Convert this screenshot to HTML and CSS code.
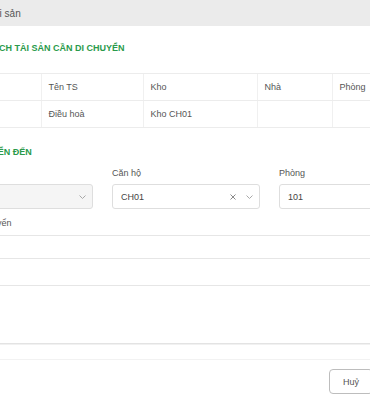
FILE: index.html
```html
<!DOCTYPE html>
<html lang="vi">
<head>
<meta charset="utf-8">
<link rel="stylesheet" href="styles.css">
</head>
<body>
<div class="modal">
  <div class="modal-header">Di chuyển tài sản</div>
  <div class="modal-body">
    <div class="section-title">Danh sách tài sản cần di chuyển</div>
    <table class="asset-table">
      <colgroup>
        <col class="c1"><col class="c2"><col class="c3"><col class="c4"><col class="c5"><col>
      </colgroup>
      <thead>
        <tr><th>Mã TS</th><th>Tên TS</th><th>Kho</th><th>Nhà</th><th>Phòng</th><th></th></tr>
      </thead>
      <tbody>
        <tr><td>TS001</td><td>Điều hoà</td><td>Kho CH01</td><td></td><td></td><td></td></tr>
      </tbody>
    </table>
    <div class="section-title second">Nơi chuyển đến</div>
    <div class="form-row">
      <div class="field">
        <div class="label">Tòa nhà</div>
        <div class="select disabled">
          <span class="value"></span>
          <svg class="chev" width="7" height="4" viewBox="0 0 7 4"><path d="M0.5 0.5l3 3 3-3" fill="none" stroke="#a8a8a8" stroke-width="1"/></svg>
        </div>
      </div>
      <div class="field">
        <div class="label">Căn hộ</div>
        <div class="select">
          <span class="value">CH01</span>
          <svg class="clear" width="6" height="6" viewBox="0 0 6 6"><path d="M0.5 0.5l5 5M5.5 0.5l-5 5" fill="none" stroke="#8a8a8a" stroke-width="1"/></svg>
          <svg class="chev" width="7" height="4" viewBox="0 0 7 4"><path d="M0.5 0.5l3 3 3-3" fill="none" stroke="#a8a8a8" stroke-width="1"/></svg>
        </div>
      </div>
      <div class="field">
        <div class="label">Phòng</div>
        <div class="select">
          <span class="value">101</span>
        </div>
      </div>
    </div>
    <div class="label reason-label">Lý do chuyển</div>
    <div class="input"></div>
    <div class="input second-input"></div>
    <div class="textarea"></div>
  </div>
  <div class="modal-footer">
    <button class="btn">Huỷ</button>
  </div>
</div>
</body>
</html>
```
FILE: styles.css
```css
html, body {
  margin: 0;
  padding: 0;
  background: #fff;
}
body {
  width: 370px;
  height: 400px;
  overflow: hidden;
  font-family: "Liberation Sans", Arial, sans-serif;
  color: #555;
}
.modal {
  margin-left: -60px;
  width: 520px;
}
.modal-header {
  height: 26px;
  background: #ebebeb;
  font-size: 10px;
  line-height: 27px;
  padding-left: 4px;
  color: #555;
}
.modal-body {
  padding-left: 18px;
}
.section-title {
  margin-top: 16px;
  font-size: 9px;
  line-height: 12px;
  font-weight: bold;
  text-transform: uppercase;
  color: #2a9a4b;
}
.section-title.second {
  margin-top: 18px;
  text-indent: -5px;
}
.asset-table {
  margin-top: 19px;
  border-collapse: collapse;
  table-layout: fixed;
  width: 500px;
  font-size: 9px;
}
.asset-table col.c1 { width: 83px; }
.asset-table col.c2 { width: 102px; }
.asset-table col.c3 { width: 114px; }
.asset-table col.c4 { width: 75px; }
.asset-table col.c5 { width: 75px; }
.asset-table th,
.asset-table td {
  border-top: 1px solid #ececec;
  border-bottom: 1px solid #ececec;
  border-left: 1px solid #f0f0f0;
  height: 26px;
  padding: 0 7px;
  text-align: left;
  font-weight: normal;
  color: #555;
}
.asset-table th:first-child,
.asset-table td:first-child {
  border-left: none;
}
.form-row {
  display: grid;
  grid-template-columns: 135px 148px 148px;
  column-gap: 19px;
  margin-top: 9px;
}
.label {
  font-size: 9px;
  line-height: 12px;
  color: #555;
}
.field .label {
  margin-bottom: 5px;
}
.select {
  box-sizing: border-box;
  height: 25px;
  border: 1px solid #dedede;
  border-radius: 3px;
  display: flex;
  align-items: center;
  padding: 0 6px 0 8px;
  gap: 10px;
  font-size: 9px;
  color: #444;
}
.select.disabled {
  background: #f5f5f5;
}
.select .value {
  flex: 1;
}
.reason-label {
  margin-top: 8px;
}
.input {
  box-sizing: border-box;
  margin-top: 6px;
  height: 24px;
  border-top: 1px solid #e6e6e6;
  border-bottom: 1px solid #e6e6e6;
}
.second-input {
  margin-top: 0;
  height: 27px;
  border-top: none;
}
.textarea {
  box-sizing: border-box;
  height: 58px;
  border-bottom: 1px solid #e3e3e3;
  box-shadow: 0 1px 0 #f1f1f1;
}
.modal-footer {
  margin-top: 15px;
  border-top: 1px solid #f2f2f2;
  padding: 9px 0 0 389px;
}
.btn {
  box-sizing: border-box;
  height: 25px;
  padding: 0 13px;
  border: 1px solid #bdbdbd;
  border-radius: 4px;
  background: #fff;
  font-family: "Liberation Sans", Arial, sans-serif;
  font-size: 9px;
  color: #555;
}
```
